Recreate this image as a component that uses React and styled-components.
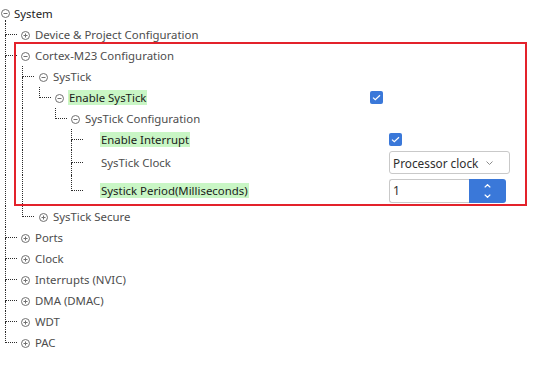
import React from 'react'
import styled, { createGlobalStyle } from 'styled-components'

const GlobalStyle = createGlobalStyle`
	html, body {
		margin: 0;
		padding: 0;
		background: #ffffff;
	}
	body {
		font-family: "Noto Sans", "Open Sans", sans-serif;
		font-size: 11.4px;
		color: #444444;
	}
`;

// x of the vertical guide line for each depth, and x of the toggle icon per depth
const LINE_X = [5, 22, 39, 55, 71];
const ICON_X = [1, 21, 39, 55, 71, 87];

const tree = {
	label: 'System', open: true,
	children: [
		{ label: 'Device & Project Configuration' },
		{
			label: 'Cortex-M23 Configuration', open: true,
			children: [
				{
					label: 'SysTick', open: true,
					children: [
						{
							label: 'Enable SysTick', open: true, hl: true,
							value: { type: 'check', at: 370 },
							children: [
								{
									label: 'SysTick Configuration', open: true,
									children: [
										{ label: 'Enable Interrupt', leaf: true, hl: true, value: { type: 'check', at: 389 } },
										{ label: 'SysTick Clock', leaf: true, h: 25, value: { type: 'select', at: 389, text: 'Processor clock' } },
										{ label: 'Systick Period(Milliseconds)', leaf: true, hl: true, h: 31, value: { type: 'number', at: 389, text: '1' } },
									],
								},
							],
						},
					],
				},
				{ label: 'SysTick Secure' },
			],
		},
		{ label: 'Ports' },
		{ label: 'Clock' },
		{ label: 'Interrupts (NVIC)' },
		{ label: 'DMA (DMAC)' },
		{ label: 'WDT' },
		{ label: 'PAC' },
	],
};

const flatten = (node, depth, trail, isLast, out) => {
	out.push({ ...node, depth, trail, isLast });
	if (node.open && node.children) {
		node.children.forEach((child, i) =>
			flatten(child, depth + 1, [...trail, isLast], i === node.children.length - 1, out));
	}
	return out;
};

const ToggleIcon = ({ open }) => (
	<svg width="9" height="9" viewBox="0 0 9 9">
		<circle cx="4.5" cy="4.5" r="4" fill="none" stroke="#707070" strokeWidth="1" />
		<path d="M2.5 4.5h4" stroke="#707070" strokeWidth="1" />
		{!open && <path d="M4.5 2.5v4" stroke="#707070" strokeWidth="1" />}
	</svg>
);

const CheckBox = () => (
	<Check>
		<svg width="9" height="7" viewBox="0 0 9 7">
			<path d="M1 3.6l2.3 2.1L8 1.2" fill="none" stroke="#ffffff" strokeWidth="1.2" />
		</svg>
	</Check>
);

const SelectField = ({ text }) => (
	<SelectBox>
		<span>{text}</span>
		<svg width="7" height="4" viewBox="0 0 7 4">
			<path d="M0.5 0.5L3.5 3.5L6.5 0.5" fill="none" stroke="#8c8c8c" strokeWidth="1" />
		</svg>
	</SelectBox>
);

const NumberField = ({ text }) => (
	<NumberWrap>
		<NumberInput>{text}</NumberInput>
		<Spin>
			<svg width="7" height="4" viewBox="0 0 7 4">
				<path d="M0.7 3.4L3.5 0.7L6.3 3.4" fill="none" stroke="#ffffff" strokeWidth="1.3" />
			</svg>
			<svg width="7" height="4" viewBox="0 0 7 4">
				<path d="M0.7 0.6L3.5 3.3L6.3 0.6" fill="none" stroke="#ffffff" strokeWidth="1.3" />
			</svg>
		</Spin>
	</NumberWrap>
);

const renderValue = (value) => {
	if (!value) return null;
	if (value.type === 'check') return <CheckBox />;
	if (value.type === 'select') return <SelectField text={value.text} />;
	return <NumberField text={value.text} />;
};

const TreeRow = ({ row }) => {
	const { depth, trail, isLast } = row;
	const h = row.h || 21;
	const guides = [];
	for (let i = 0; i < depth - 1; i++) {
		guides.push(<Guide key={i} $w={LINE_X[i + 1] - LINE_X[i]} $on={!trail[i + 1]} />);
	}

	return (
		<Row $h={h}>
			<TreePart $pad={depth ? LINE_X[0] : ICON_X[0]} $w={row.value ? row.value.at : null}>
				{guides}
				{depth > 0 && (
					<Conn $w={ICON_X[depth] - LINE_X[depth - 1]}>
						<ConnTop $h={Math.ceil(h / 2)} />
						<ConnBottom $on={!isLast} />
					</Conn>
				)}
				{depth === 0
					? <RootIcon><ToggleIcon open /></RootIcon>
					: <IconSlot>{!row.leaf && <ToggleIcon open={row.open} />}</IconSlot>}
				<Label $hl={row.hl} $root={depth === 0}>{row.label}</Label>
			</TreePart>
			{row.value && <Value>{renderValue(row.value)}</Value>}
		</Row>
	);
};

const App = () => {
	const rows = flatten(tree, 0, [], true, []);
	return (
		<>
			<GlobalStyle />
			<Page>
				{rows.map((row, i) => <TreeRow key={i} row={row} />)}
				<Highlight />
			</Page>
		</>
	);
};

const Page = styled.div`
	position: relative;
	width: 545px;
	height: 368px;
	padding-top: 3px;
	box-sizing: border-box;
	overflow: hidden;
`;

const Row = styled.div`
	display: flex;
	height: ${p => p.$h}px;
`;

const TreePart = styled.div`
	display: flex;
	align-items: center;
	box-sizing: border-box;
	padding-left: ${p => p.$pad}px;
	flex: ${p => (p.$w ? `0 0 ${p.$w}px` : '1 1 auto')};
`;

const Guide = styled.span`
	align-self: stretch;
	flex: 0 0 ${p => p.$w}px;
	box-sizing: border-box;
	border-left: 1px dotted ${p => (p.$on ? '#2b2b2b' : 'transparent')};
`;

const Conn = styled.span`
	align-self: stretch;
	flex: 0 0 ${p => p.$w}px;
	display: flex;
	flex-direction: column;
	align-items: flex-start;
`;

const ConnTop = styled.span`
	height: ${p => p.$h}px;
	width: 12px;
	box-sizing: border-box;
	border-left: 1px dotted #2b2b2b;
	border-bottom: 1px dotted #2b2b2b;
`;

const ConnBottom = styled.span`
	flex: 1;
	border-left: 1px dotted ${p => (p.$on ? '#2b2b2b' : 'transparent')};
`;

const IconSlot = styled.span`
	flex: 0 0 9px;
	height: 9px;
	display: flex;
	margin-right: 4px;
	margin-top: 1px;
`;

const RootIcon = styled.span`
	align-self: stretch;
	flex: 0 0 9px;
	display: flex;
	flex-direction: column;
	align-items: center;
	padding-top: 6px;
	margin-right: 3px;

	& svg {
		flex: none;
	}

	&::after {
		content: '';
		flex: 1;
		margin-top: 2px;
		border-left: 1px dotted #2b2b2b;
	}
`;

const Label = styled.span`
	white-space: nowrap;
	line-height: 15px;
	padding: 0 1px;
	color: ${p => (p.$root ? '#1c1c1c' : p.$hl ? '#1a1a1a' : '#4d4d4d')};
	background: ${p => (p.$hl ? '#c9f6c5' : 'transparent')};
`;

const Value = styled.div`
	display: flex;
	align-items: center;
`;

const Check = styled.span`
	width: 13px;
	height: 13px;
	border-radius: 2px;
	background: #3a78d9;
	display: flex;
	align-items: center;
	justify-content: center;
`;

const SelectBox = styled.div`
	box-sizing: border-box;
	width: 121px;
	height: 23px;
	border: 1px solid #c9c9c9;
	border-radius: 3px;
	display: flex;
	align-items: center;
	justify-content: space-between;
	padding: 0 16px 0 3px;
	font-size: 11.8px;
	color: #2e2e2e;
`;

const NumberWrap = styled.div`
	display: flex;
	height: 24px;
`;

const NumberInput = styled.div`
	box-sizing: border-box;
	width: 80px;
	border: 1px solid #c9c9c9;
	border-right: none;
	border-radius: 3px 0 0 3px;
	padding-left: 3px;
	display: flex;
	align-items: center;
	font-size: 12px;
	color: #2e2e2e;
`;

const Spin = styled.div`
	width: 37px;
	background: #3a78d9;
	border-radius: 0 3px 3px 0;
	display: flex;
	flex-direction: column;
	align-items: center;
	justify-content: center;
	gap: 6px;
`;

// red annotation frame drawn over the Cortex-M23 group
const Highlight = styled.div`
	position: absolute;
	left: 14px;
	top: 42px;
	width: 513px;
	height: 164px;
	box-sizing: border-box;
	border: 2px solid #e3222b;
	pointer-events: none;
`;

export default App
